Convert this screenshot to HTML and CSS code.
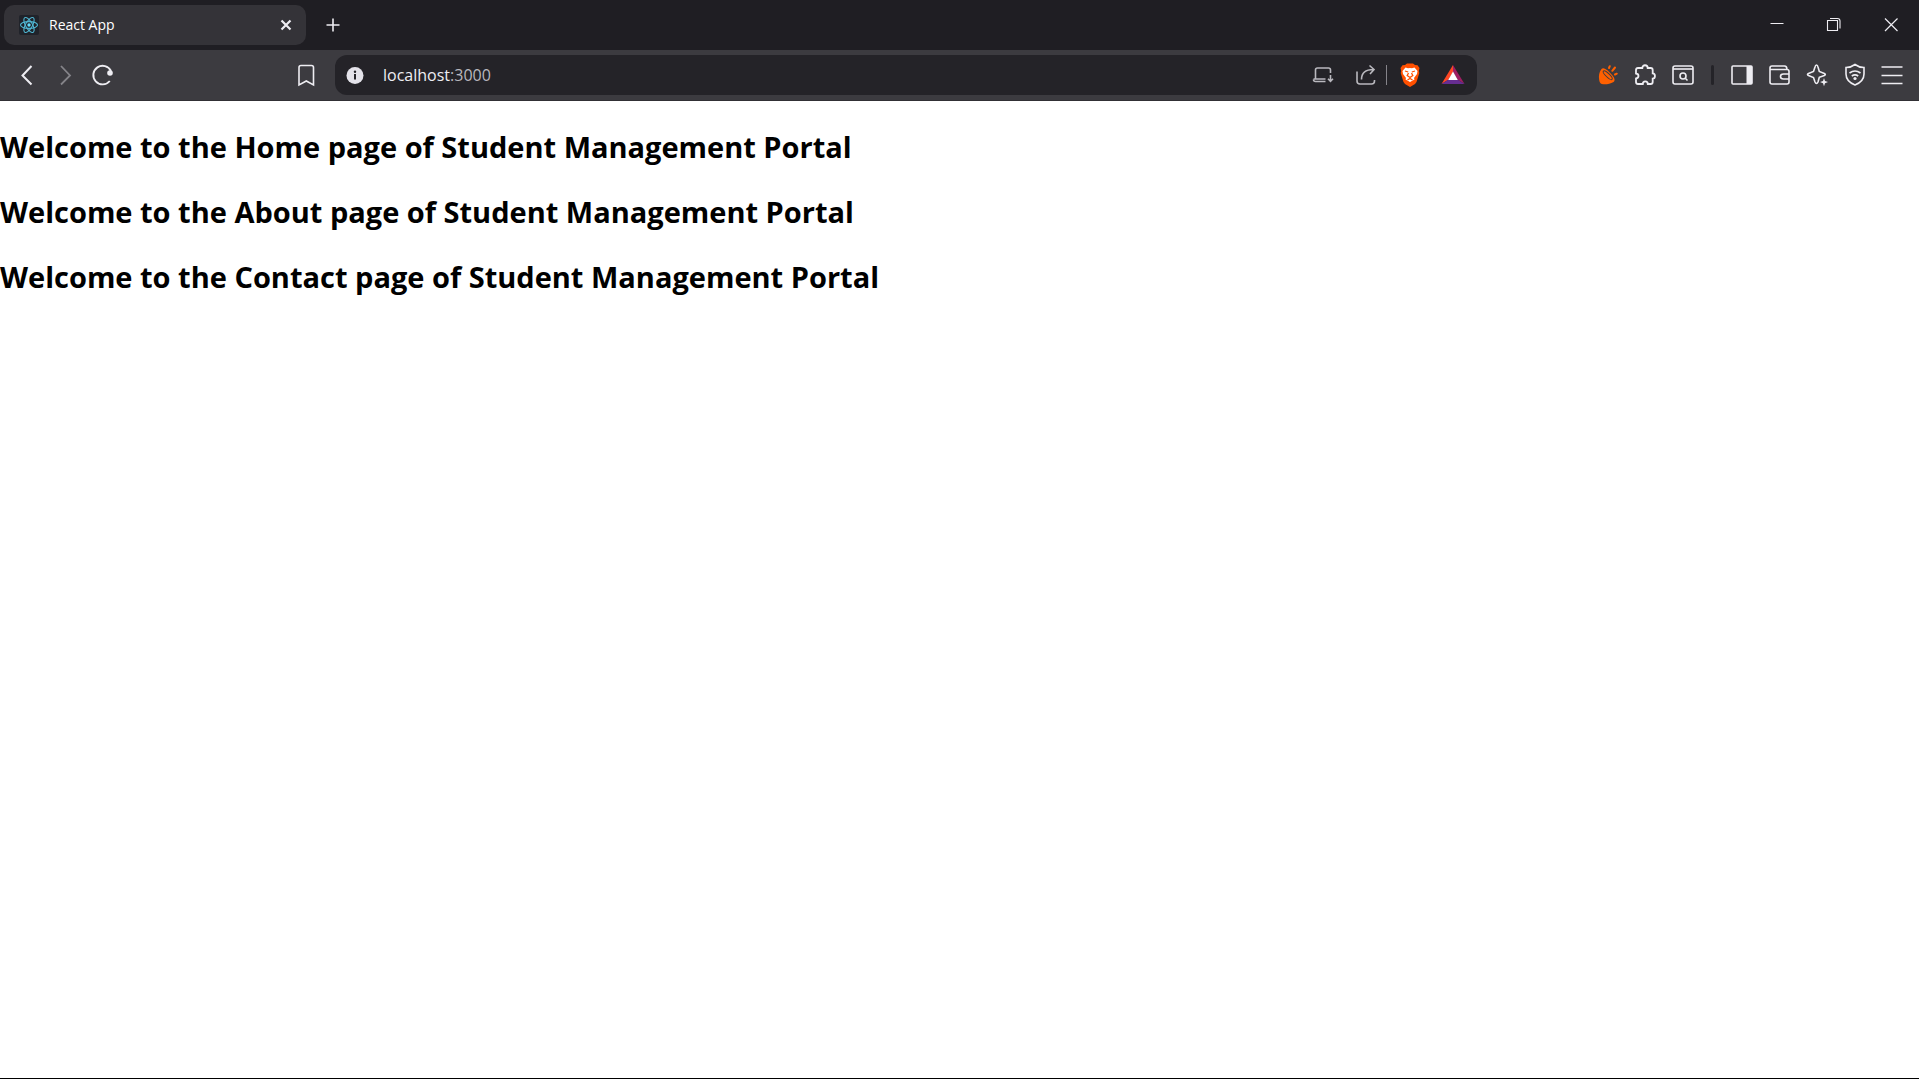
FILE: index.html
```html
<!DOCTYPE html>
<html lang="en">
<head>
<meta charset="utf-8">
<title>React App</title>
<link rel="stylesheet" href="styles.css">
</head>
<body>
<header class="browser">
  <div class="tab-strip">
    <div class="tab">
      <svg class="favicon" viewBox="0 0 20 20" aria-hidden="true"><rect width="20" height="20" rx="2" fill="#20232a"/><g fill="none" stroke="#50b8d4" stroke-width="1.1"><ellipse cx="10" cy="10" rx="8.5" ry="3.4"/><ellipse cx="10" cy="10" rx="8.5" ry="3.4" transform="rotate(60 10 10)"/><ellipse cx="10" cy="10" rx="8.5" ry="3.4" transform="rotate(120 10 10)"/></g><circle cx="10" cy="10" r="1.7" fill="#61dafb"/></svg>
      <span class="tab-title">React App</span>
      <button class="icon-button tab-close" aria-label="Close tab"><svg viewBox="0 0 24 24"><path stroke-width="2.2" d="M7.5 7.5l9 9M16.500 7.500l-9 9"/></svg></button>
    </div>
    <button class="icon-button new-tab" aria-label="New tab"><svg viewBox="0 0 24 24"><path d="M12 5.500v13M5.500 12h13"/></svg></button>
    <div class="window-controls">
      <button class="icon-button" aria-label="Minimize"><svg viewBox="0 0 24 24"><path stroke-width="1" d="M5.500 10.500h13"/></svg></button>
      <button class="icon-button" aria-label="Restore"><svg viewBox="0 0 24 24"><path stroke-width="1.100" d="M5.500 7.500h10v10h-10zM8 5.500h7.500q2.500 0 2.500 2.500v7.500"/></svg></button>
      <button class="icon-button" aria-label="Close window"><svg viewBox="0 0 24 24"><path stroke-width="1.200" d="M6 5.500l12.500 12.500M18.500 5.500L6 18"/></svg></button>
    </div>
  </div>
  <div class="toolbar">
    <nav class="nav-buttons">
      <button class="icon-button" aria-label="Back"><svg viewBox="0 0 24 24"><path stroke-width="2" d="M16.500 3l-9 9.500 9 9"/></svg></button>
      <button class="icon-button dim" aria-label="Forward"><svg viewBox="0 0 24 24"><path stroke-width="1.800" d="M8 3l9 9.500-9 9"/></svg></button>
      <button class="icon-button" aria-label="Reload"><svg viewBox="0 0 24 24"><path stroke-width="1.900" d="M18.800 18A9.300 9.300 0 1 1 20 8"/><circle cx="19" cy="10" r="2.800" fill="currentColor" stroke="none"/></svg></button>
    </nav>
    <button class="icon-button bookmark" aria-label="Bookmark"><svg viewBox="0 0 24 24"><path d="M5 4.500q0-2 2-2h10.500q2 0 2 2V22l-7.200-4L5 22z"/></svg></button>
    <div class="address">
      <button class="icon-button site-info" aria-label="Site information"><svg viewBox="0 0 24 24"><circle cx="12" cy="12.500" r="8.500" fill="#e4e3ea" stroke="none"/><path d="M12 11v5.500" stroke="#242328" stroke-width="2"/><circle cx="12" cy="8.700" r="1.200" fill="#242328" stroke="none"/></svg></button>
      <a class="url" href="http://localhost:3000">localhost<span class="port">:3000</span></a>
      <button class="icon-button muted" aria-label="Install app"><svg viewBox="0 0 24 24"><path d="M4.500 16V7q0-2 2-2h11q2 0 2 2v3M2.500 16h12M2.500 16.500q0 2 2 2h10M19.500 12v6M17 15.800l2.500 2.500 2.500-2.500"/></svg></button>
      <button class="icon-button muted share" aria-label="Share"><svg viewBox="0 0 24 24"><path d="M3 8.500V18q0 3 3 3h11.500q3 0 3-3v-1M7.500 16.500c0-7 4-10 12-10M15.500 2.500l4.500 4-4 4.500"/></svg></button>
      <span class="address-divider"></span>
      <button class="icon-button shields" aria-label="Brave Shields"><svg viewBox="0 0 24 24"><path fill="#ff5000" stroke="none" d="M7 2L9 .500h6L17 2l2.500.300L21.500 5l-.700 3 .5 2-2.800 9-1.500 2-5 3-5-3-1.500-2L2.700 10l.5-2-.7-3 2-2.700z"/><path fill="#fff" stroke="none" d="M7.500 4.500l2.500.800 2-.3 2 .3 2.500-.8 3 3.500-.5 3-3 4 .5 1.500-4.500 2.500-4.500-2.500.5-1.500-3-4-.5-3z"/><path stroke="#ff5000" stroke-width="1.300" d="M7 8l3.200 1M17 8l-3.200 1M10.500 10l-1.300 2.500L12 14.500l2.800-2L13.500 10M12 14v2M9.500 17l2.500-1.500 2.500 1.500"/></svg></button>
      <button class="icon-button rewards" aria-label="Brave Rewards"><svg viewBox="0 0 24 24"><path fill="#ff4724" stroke="none" d="M12 2v7L7.500 16.500.500 21z"/><path fill="#9e1f63" stroke="none" d="M12 2l11.500 19-7-4.500L12 9z"/><path fill="#662d91" stroke="none" d="M.500 21l7-4.500h9l7 4.500z"/><path fill="#fff" stroke="none" d="M12 8.500l4.800 8.500H7.200z"/></svg></button>
    </div>
    <div class="extensions">
      <button class="icon-button" aria-label="Extension"><svg viewBox="0 0 24 24"><path fill="#ff6000" stroke="none" d="M5.500 6C3 9 2.500 13 3.200 17c.5 3 1.500 4 4.300 4.300 3 .2 7-.3 10-2.300 2-1.500 1-4-1-6.500C13 8.500 8 3.500 5.500 6z"/><ellipse cx="11.700" cy="12.200" rx="6" ry="1.800" transform="rotate(44 11.700 12.200)" stroke="#3c3b40" stroke-width="1"/><path stroke="#ff6000" stroke-width="2" stroke-linecap="round" d="M13 5l.8-1.800M16.300 7.800l2.700-3.300M19 11.500l1.800-.8"/></svg></button>
      <button class="icon-button" aria-label="Extensions"><svg viewBox="0 0 24 24"><path stroke-width="1.800" d="M3 7q0-2 2-2h4.300c0-3.700 5.400-3.700 5.400 0h3q2 0 2 2v3.300c3 0 3 5.400 0 5.400V19q0 2-2 2h-2.900c0-3.500-5-3.500-5 0H5q-2 0-2-2v-3.500c3.300-.5 3.300-4.500 0-5z"/></svg></button>
      <button class="icon-button" aria-label="Search tabs"><svg viewBox="0 0 24 24"><rect x="2" y="3" width="20" height="18" rx="2"/><path d="M2 6h20"/><circle cx="12" cy="13" r="3"/><path d="M14.500 15.500l2 2"/></svg></button>
    </div>
    <span class="toolbar-divider"></span>
    <div class="tools">
      <button class="icon-button" aria-label="Sidebar"><svg viewBox="0 0 24 24"><rect x="2" y="3" width="20" height="18" rx="1"/><path fill="currentColor" stroke="none" d="M16.500 3H22v18h-5.500z"/></svg></button>
      <button class="icon-button" aria-label="Wallet"><svg viewBox="0 0 24 24"><path d="M22 8V19q0 2-2 2H5q-2 0-2-2V5q0-2 2-2h12.500q2.500 0 2.500 3.500M3 6.500h17q2 0 2 2M22 11h-5.500q-3 0-3 2.500t3 2.500H22"/></svg></button>
      <button class="icon-button" aria-label="Leo AI"><svg viewBox="0 0 24 24"><path d="M11.500 2q1 0 1.500 2l1.300 4.500 5 2q2 1 0 2l-5 1.800L13 19q-1.500 3-3 0l-1.500-4.500-5-2q-2-1 0-2l5-2L10 4q.5-2 1.500-2z"/><path fill="currentColor" stroke="none" d="M19 15l1 3 3 1-3 1.200-1 3-1-3-3-1.200 3-1z"/></svg></button>
      <button class="icon-button" aria-label="VPN"><svg viewBox="0 0 24 24"><path d="M12 1.500q4 3 9 3V11c0 6-4 9-9 11-5-2-9-5-9-11V4.500q5 0 9-3zM6.500 10q5.500-4 11 0M8.800 13q3.200-2.300 6.400 0"/><circle cx="12" cy="15.500" r="1.600" fill="currentColor" stroke="none"/></svg></button>
      <button class="icon-button" aria-label="Menu"><svg viewBox="0 0 24 24"><path d="M1.500 4h21M1.500 12.500h21M1.500 20.500h21"/></svg></button>
    </div>
  </div>
</header>
<main class="page">
  <h2>Welcome to the Home page of Student Management Portal</h2>
  <h2>Welcome to the About page of Student Management Portal</h2>
  <h2>Welcome to the Contact page of Student Management Portal</h2>
</main>
</body>
</html>
```
FILE: styles.css
```css
* { box-sizing: border-box; }

body {
  margin: 0;
  min-height: 100vh;
  display: flex;
  flex-direction: column;
  background: #fff;
  color: #000;
  font-family: "Segoe UI", "Open Sans", "Noto Sans", sans-serif;
}

.browser { color: #eeedf2; }

.tab-strip {
  display: flex;
  align-items: center;
  height: 50px;
  padding-left: 4px;
  background: #1f1e23;
}

.tab {
  display: flex;
  align-items: center;
  gap: 10px;
  width: 302px;
  height: 40px;
  padding: 0 8px 0 15px;
  border-radius: 10px;
  background: #343338;
}

.favicon { width: 20px; height: 20px; }

.tab-title {
  flex: 1;
  font-size: 14px;
  line-height: 20px;
  color: #fff;
}

.icon-button {
  display: flex;
  align-items: center;
  justify-content: center;
  flex: none;
  width: 38px;
  height: 40px;
  padding: 0;
  border: 0;
  background: none;
  color: inherit;
}

.icon-button svg {
  width: 24px;
  height: 24px;
  fill: none;
  stroke: currentColor;
  stroke-width: 1.6;
}

.tab-close { width: 24px; }
.new-tab { margin-left: 8px; }

.window-controls { display: flex; margin-left: auto; }
.window-controls .icon-button { width: 57px; }

.toolbar {
  display: flex;
  align-items: center;
  height: 51px;
  padding: 0 8px;
  background: #3c3b40;
  border-bottom: 1px solid #313035;
}

.nav-buttons { display: flex; }
.dim { color: #858489; }
.bookmark { margin: 0 10px 0 165px; }

.address {
  display: flex;
  align-items: center;
  flex: 1;
  height: 40px;
  padding: 0 5px 0 1px;
  border-radius: 12px;
  background: #242328;
}

.url {
  flex: 1;
  margin-left: 9px;
  font-size: 16px;
  line-height: 24px;
  color: #eeedf2;
  text-decoration: none;
}

.port { color: #b9b8be; }
.muted { color: #b9b8be; }
.share { margin-left: 5px; }

.address-divider {
  width: 1px;
  height: 20px;
  margin: 0 4px 0 1px;
  background: #85848a;
}

.rewards { margin-left: 5px; }

.extensions,
.tools { display: grid; }
.extensions { grid-template-columns: repeat(3, 1fr); width: 113px; margin-left: 112px; }
.tools { grid-template-columns: repeat(5, 1fr); width: 188px; }
.extensions .icon-button,
.tools .icon-button { width: 100%; }

.toolbar-divider {
  width: 3px;
  height: 20px;
  margin: 0 9px;
  border-radius: 2px;
  background: #242328;
}

.page {
  flex: 1;
  padding-top: 1px;
  border-bottom: 1px solid #000;
}

.page h2 {
  margin: 25px 0;
  font-size: 29px;
  line-height: 40px;
  font-weight: 660;
}
```
